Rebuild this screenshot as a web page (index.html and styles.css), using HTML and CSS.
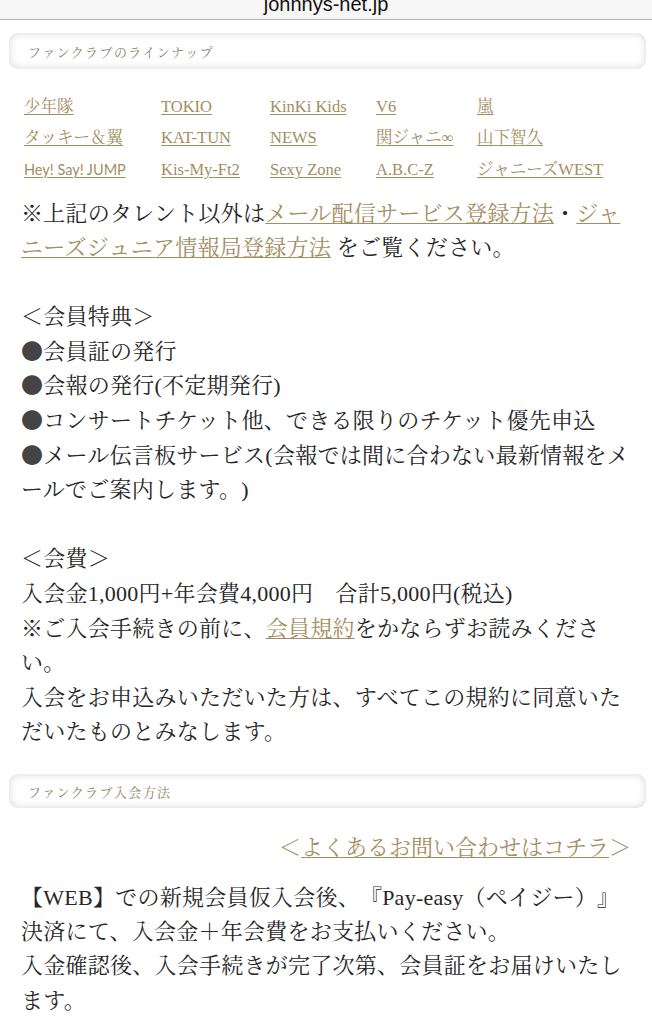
FILE: index.html
```html
<!DOCTYPE html>
<html lang="ja">
<head>
<meta charset="utf-8">
<title>johnnys-net.jp</title>
<link rel="stylesheet" href="styles.css">
</head>
<body>
<div class="urlbar"><span class="url">johnnys-net.jp</span></div>

<div class="sechead"><span>ファンクラブのラインナップ</span></div>

<div class="lineup">
  <a href="#">少年隊</a>
  <a href="#">TOKIO</a>
  <a href="#">KinKi Kids</a>
  <a href="#">V6</a>
  <a href="#">嵐</a>
  <a href="#">タッキー＆翼</a>
  <a href="#">KAT-TUN</a>
  <a href="#">NEWS</a>
  <a href="#">関ジャニ∞</a>
  <a href="#">山下智久</a>
  <a href="#" class="hsj">Hey! Say! JUMP</a>
  <a href="#">Kis-My-Ft2</a>
  <a href="#">Sexy Zone</a>
  <a href="#">A.B.C-Z</a>
  <a href="#">ジャニーズWEST</a>
</div>

<div class="content">
  <p class="block">※上記のタレント以外は<a href="#">メール配信サービス登録方法</a>・<a href="#">ジャニーズジュニア情報局登録方法</a> をご覧ください。</p>

  <p class="block gap">＜会員特典＞<br><span class="dot">●</span>会員証の発行<br><span class="dot">●</span>会報の発行(不定期発行)<br><span class="dot">●</span>コンサートチケット他、できる限りのチケット優先申込<br><span class="dot">●</span>メール伝言板サービス(会報では間に合わない最新情報をメールでご案内します。)</p>

  <p class="block gap">＜会費＞<br>入会金1,000円+年会費4,000円　合計5,000円(税込)<br>※ご入会手続きの前に、<a href="#">会員規約</a>をかならずお読みください。<br>入会をお申込みいただいた方は、すべてこの規約に同意いただいたものとみなします。</p>
</div>

<div class="sechead second"><span>ファンクラブ入会方法</span></div>

<div class="content">
  <p class="faq">＜<a href="#">よくあるお問い合わせはコチラ</a>＞</p>
  <p class="block steps">【WEB】での新規会員仮入会後、『Pay-easy（ペイジー）』決済にて、入会金＋年会費をお支払いください。<br>入金確認後、入会手続きが完了次第、会員証をお届けいたします。</p>
</div>
</body>
</html>
```

FILE: styles.css
```css
html, body {
  margin: 0;
  padding: 0;
  background: #ffffff;
}

body {
  font-family: "Liberation Serif", "Noto Serif CJK JP", "Noto Sans CJK JP", serif;
  color: #262626;
  text-spacing-trim: space-all;
}

.urlbar {
  height: 19px;
  overflow: hidden;
  background: #f7f7f7;
  border-bottom: 1px solid #b4b4b4;
  text-align: center;
}

.url {
  display: block;
  margin-top: -6px;
  font-family: "Liberation Sans", Arial, sans-serif;
  font-size: 20px;
  line-height: 20px;
  color: #111;
}

.sechead {
  margin: 13px 6px 0 9px;
  height: 36px;
  border-radius: 9px;
  background: #ffffff;
  box-shadow: inset 0 0 9px rgba(0, 0, 0, 0.16);
  display: flex;
  align-items: center;
  padding-left: 19px;
}

.sechead span {
  font-family: "Noto Serif CJK JP", "Noto Sans CJK JP", serif;
  font-size: 13px;
  letter-spacing: 1.4px;
  color: #8e8264;
}

.sechead.second {
  margin-top: 24px;
  height: 34px;
}

a {
  color: #a38e5f;
  text-decoration: underline;
  text-decoration-thickness: 1px;
  text-underline-offset: 2px;
}

.lineup {
  margin-top: 22px;
  padding-left: 24px;
  display: grid;
  grid-template-columns: 137px 109px 106px 101px auto;
  grid-auto-rows: 31.5px;
  align-items: center;
  font-size: 16.5px;
}

.lineup a {
  justify-self: start;
  line-height: 20px;
}

.lineup .hsj {
  font-family: Lato, "Liberation Sans", sans-serif;
  font-size: 14.5px;
}

.content {
  padding: 0 21px;
}

.block {
  margin: 11px 0 0;
  font-size: 22px;
  letter-spacing: 0.25px;
  line-height: 34.6px;
}

.block.gap {
  margin-top: 34.6px;
}

.dot {
  font-family: "Noto Sans CJK JP", sans-serif;
  line-height: 0;
  color: #444;
}

.faq {
  margin: 23px 0 0;
  text-align: right;
  font-size: 22px;
  line-height: 34px;
  color: #a38e5f;
}

.block.steps {
  margin-top: 16px;
  line-height: 34.2px;
}
```
